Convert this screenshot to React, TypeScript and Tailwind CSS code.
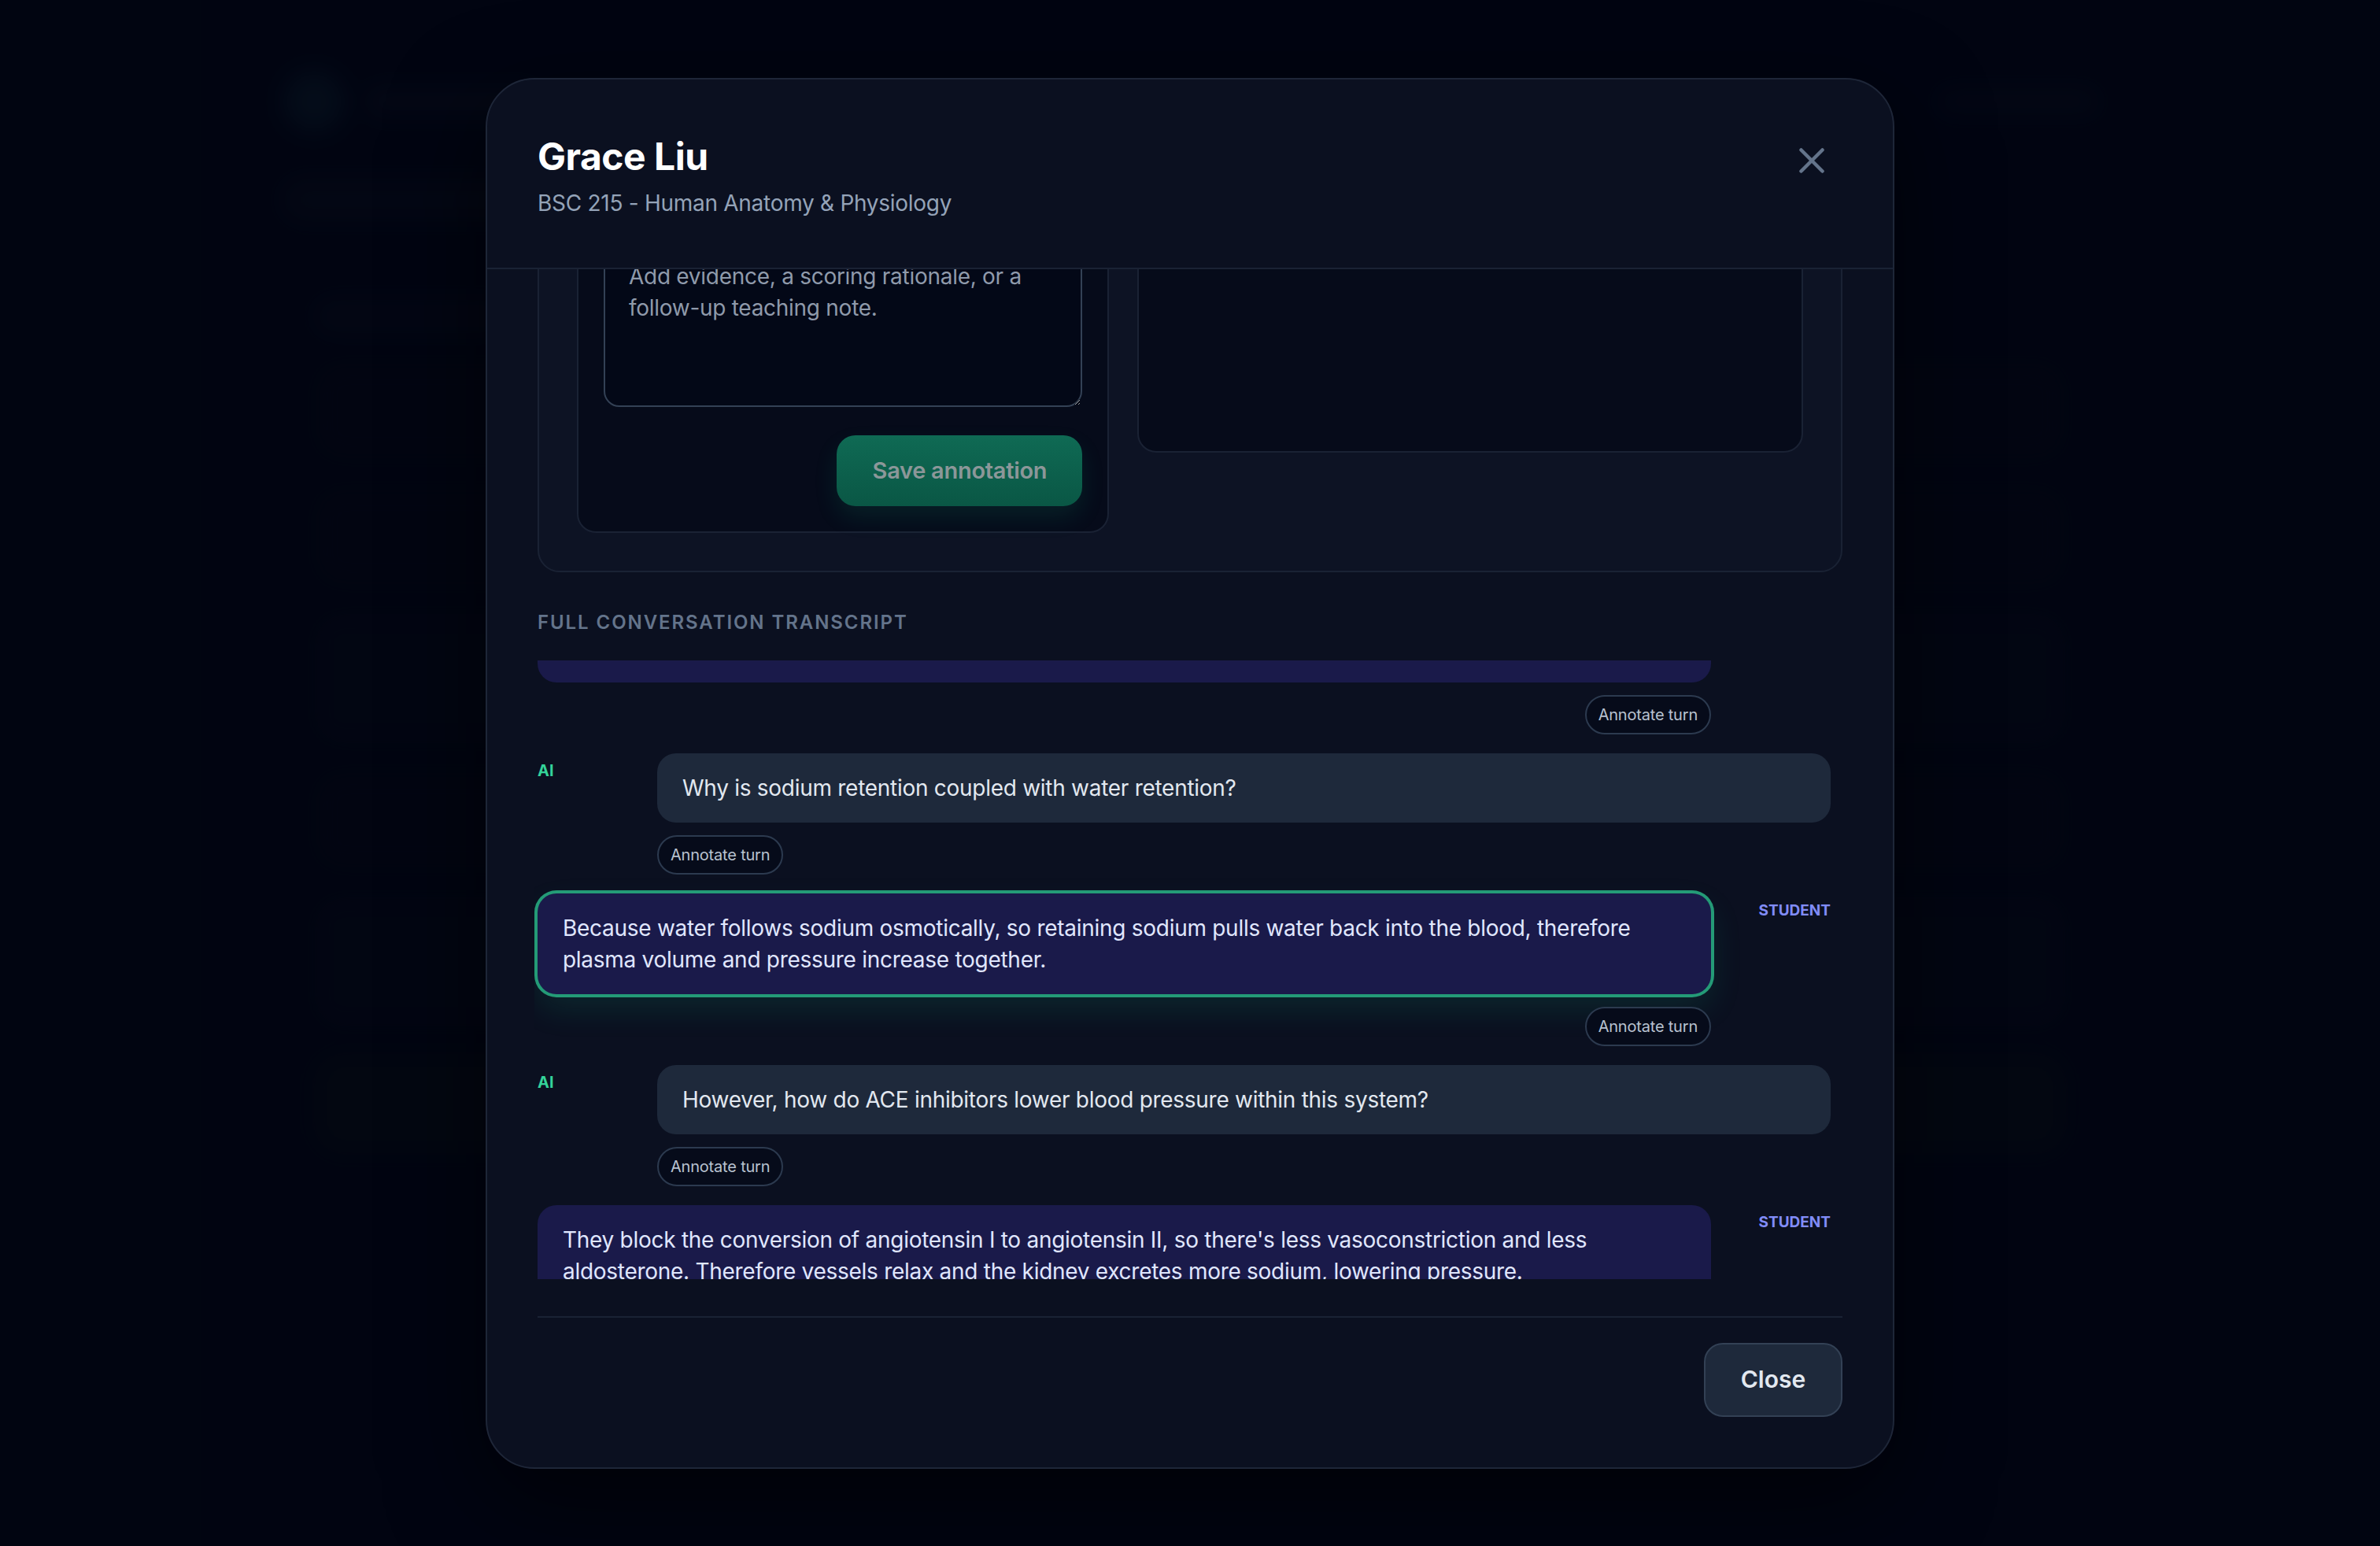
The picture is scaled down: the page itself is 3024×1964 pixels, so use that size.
import { X } from "lucide-react";

type Turn = {
  role: "ai" | "student";
  text: string;
  active?: boolean;
};

const turns: Turn[] = [
  {
    role: "student",
    text: "Aldosterone makes the kidney hold on to sodium, and that keeps more fluid in the blood vessels so the pressure goes up over time.",
  },
  { role: "ai", text: "Why is sodium retention coupled with water retention?" },
  {
    role: "student",
    active: true,
    text: "Because water follows sodium osmotically, so retaining sodium pulls water back into the blood, therefore plasma volume and pressure increase together.",
  },
  {
    role: "ai",
    text: "However, how do ACE inhibitors lower blood pressure within this system?",
  },
  {
    role: "student",
    text: "They block the conversion of angiotensin I to angiotensin II, so there's less vasoconstriction and less aldosterone. Therefore vessels relax and the kidney excretes more sodium, lowering pressure.",
  },
];

const AnnotateButton = () => (
  <button className="h-[50px] rounded-full border-2 border-[#2c3a4f] bg-[#060b1a] px-[15px] text-[20px] tracking-[-0.01em] text-[#b8c2d0]">
    Annotate turn
  </button>
);

const TurnRow = ({ turn }: { turn: Turn }) => {
  if (turn.role === "ai") {
    return (
      <div className="grid grid-cols-[152px_1fr]">
        <div className="pt-[8px] text-[20px] leading-[28px] font-bold text-[#34d399]">
          AI
        </div>
        <div className="flex flex-col items-start gap-[16px]">
          <div className="w-full rounded-[24px] bg-[#1e293b] px-[32px] py-[24px] text-[28px] leading-[40px] tracking-[-0.01em] text-[#e2e8f0]">
            {turn.text}
          </div>
          <AnnotateButton />
        </div>
      </div>
    );
  }

  return (
    <div className="grid grid-cols-[1fr_152px]">
      <div className="flex flex-col items-end gap-[16px]">
        <div
          className={
            turn.active
              ? "w-full rounded-[24px] bg-[#1a1a4a] px-[32px] py-[24px] text-[28px] leading-[40px] tracking-[-0.01em] text-[#e0e7ff] shadow-[0_0_0_4px_#249b77,0_18px_40px_rgba(16,185,129,0.14)]"
              : "w-full rounded-[24px] bg-[#1a1a4a] px-[32px] py-[24px] text-[28px] leading-[40px] tracking-[-0.01em] text-[#e0e7ff]"
          }
        >
          {turn.text}
        </div>
        <AnnotateButton />
      </div>
      <div className="pt-[8px] text-right text-[19px] leading-[28px] font-bold text-[#818cf8]">
        STUDENT
      </div>
    </div>
  );
};

// faint dashboard that sits behind the dialog
const Backdrop = () => (
  <div className="flex flex-col gap-[60px] px-[360px] pt-[90px] blur-[14px] opacity-70">
    <div className="flex items-center justify-between">
      <div className="flex items-center gap-[28px]">
        <div className="h-[78px] w-[78px] rounded-full bg-[#0f2a3a]" />
        <div className="h-[34px] w-[220px] rounded-full bg-[#111827]" />
      </div>
      <div className="h-[30px] w-[200px] rounded-full bg-[#0d1322]" />
    </div>
    <div className="h-[52px] w-[300px] rounded-full bg-[#0e1322]" />
    <div className="flex flex-col gap-[40px] rounded-[40px] border-2 border-[#0b1120] p-[40px]">
      <div className="h-[40px] w-[240px] rounded-full bg-[#0d1222]" />
      <div className="h-[120px] rounded-[30px] bg-[#070b18]" />
      <div className="h-[120px] rounded-[30px] bg-[#070b18]" />
      <div className="h-[160px] rounded-[30px] bg-[#080c1a]" />
      <div className="h-[120px] rounded-[30px] bg-[#070b18]" />
      <div className="h-[160px] rounded-[30px] bg-[#080c1a]" />
      <div className="h-[120px] rounded-[30px] bg-[#0a1414]" />
    </div>
  </div>
);

export default function App() {
  return (
    <div className="relative min-h-screen w-full overflow-hidden bg-[#020617] [font-family:Inter,'Noto_Sans',sans-serif]">
      <Backdrop />

      <div className="absolute inset-0 flex items-center justify-center bg-[#01040f]/70">
        <div className="flex h-[1767px] w-[1790px] flex-col overflow-hidden rounded-[62px] border-2 border-[#1e2638] bg-[#0b1020] shadow-[0_40px_120px_rgba(0,0,0,0.6)]">
          {/* header */}
          <div className="flex items-start justify-between border-b-2 border-[#1a2234] px-[64px] pt-[70px] pb-[62px]">
            <div>
              <h2 className="text-[48px] leading-[56px] font-bold tracking-[-0.01em] text-white">
                Grace Liu
              </h2>
              <p className="mt-[11px] text-[28px] leading-[40px] tracking-[-0.01em] text-[#94a3b8]">
                BSC 215 - Human Anatomy &amp; Physiology
              </p>
            </div>
            <button className="-mt-[6px] p-[12px] text-[#64748b]">
              <X size={54} strokeWidth={2} />
            </button>
          </div>

          {/* body, scrolled down */}
          <div className="h-[1332px] overflow-hidden px-[64px]">
            <div className="-mt-[169px]">
              <div className="rounded-[28px] border-2 border-[#1a2234] bg-[#0d1324] p-[48px]">
                <div className="grid grid-cols-[0.8fr_1fr] items-start gap-[36px]">
                  <div className="rounded-[24px] border-2 border-[#1a2234] bg-[#060b1a] p-[32px]">
                    <div className="mb-[16px] h-[32px]" />
                    <textarea
                      className="block h-[212px] w-full resize-y rounded-[20px] border-2 border-[#334155] bg-[#030817] px-[30px] py-[24px] text-[28px] leading-[40px] tracking-[-0.01em] text-[#e2e8f0] placeholder:text-[#8f9aab] outline-none"
                      placeholder="Add evidence, a scoring rationale, or a follow-up teaching note."
                    />
                    <div className="mt-[36px] flex justify-end">
                      <button className="h-[90px] w-[312px] rounded-[24px] bg-gradient-to-b from-[#0f6a54] to-[#0a5745] text-[29px] font-semibold tracking-[-0.01em] text-[#8c9799] shadow-[0_14px_30px_rgba(16,185,129,0.12)]">
                        Save annotation
                      </button>
                    </div>
                  </div>
                  <div className="h-[352px] rounded-[24px] border-2 border-[#1a2234] bg-[#060b1a]" />
                </div>
              </div>

              <div className="mt-[48px] text-[24px] leading-[32px] font-semibold uppercase tracking-[0.08em] text-[#64748b]">
                Full conversation transcript
              </div>

              <div className="mt-[32px] -ml-[4px] h-[786px] overflow-hidden pl-[4px] pr-[15px]">
                <div className="-mt-[100px] flex flex-col gap-[24px]">
                  {turns.map((turn, i) => (
                    <TurnRow key={i} turn={turn} />
                  ))}
                </div>
              </div>
            </div>
          </div>

          {/* footer */}
          <div className="mx-[64px] flex justify-end border-t-2 border-[#1a2234] pt-[32px] pb-[64px]">
            <button className="h-[94px] w-[176px] rounded-[24px] border-2 border-[#334155] bg-[#1e293b] text-[30px] font-semibold text-[#e2e8f0]">
              Close
            </button>
          </div>
        </div>
      </div>
    </div>
  );
}
